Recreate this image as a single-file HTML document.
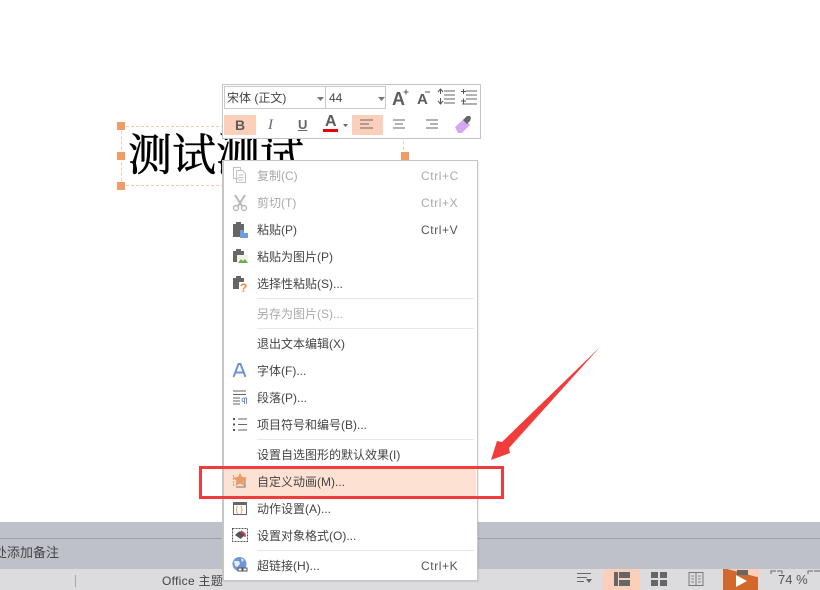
<!DOCTYPE html>
<html lang="zh">
<head>
<meta charset="utf-8">
<style>
html,body{margin:0;padding:0}
body{width:820px;height:590px;overflow:hidden;background:#fff;position:relative;font-family:"Liberation Sans","Noto Sans CJK SC",sans-serif;font-size:12px;color:#444}
.a{position:absolute}
.h{position:absolute;width:8px;height:8px;background:#f09c64}
.it{position:absolute;left:257px;height:18px;line-height:18px;white-space:nowrap;font-size:12px;color:#444}
.dis{color:#aaa}
.k{position:absolute;left:421px;height:18px;line-height:18px;font-size:12px;color:#555;letter-spacing:.6px}
.k.dis{color:#aaa}
.sep{position:absolute;left:257px;width:217px;height:1px;background:#e8e8e8}
svg{position:absolute;overflow:visible}
</style>
</head>
<body>
<!-- bottom area -->
<div class="a" style="left:0;top:522px;width:820px;height:47px;background:#bfc1ca"></div>
<div class="a" style="left:0;top:538px;width:820px;height:1px;background:#9fa1a8"></div>
<div class="a" style="left:-19px;top:544px;font-size:13px;line-height:18px;color:#444;white-space:nowrap">此处添加备注</div>
<div class="a" style="left:0;top:569px;width:820px;height:21px;background:#dcdcde"></div>
<div class="a" style="left:75px;top:575px;width:1px;height:12px;background:#a8a8a8"></div>
<div class="a" style="left:162px;top:572px;font-size:12px;line-height:18px;color:#444;white-space:nowrap;letter-spacing:.3px">Office 主题</div>

<!-- status icons -->
<svg style="left:0;top:0" width="820" height="590">
<g fill="#666">
<rect x="577" y="573" width="14" height="1"/><rect x="577" y="577" width="10" height="1"/><rect x="577" y="581" width="7" height="1"/><path d="M586 579h6l-3 4z"/>
</g>
<rect x="603" y="569" width="37" height="21" fill="#fbcfba"/>
<path d="M614 572h4v14h-4zM619 572h11v6h-11zM619 580h11v6h-11z" fill="#666"/>
<path d="M651 572h7v6h-7zM660 572h7v6h-7zM651 580h7v6h-7zM660 580h7v6h-7z" fill="#666"/>
<path d="M689 572.500h14v13h-14zM696 572.500v13" fill="none" stroke="#777"/>
<path d="M691 576h3M691 579h3M691 582h3M698 576h3M698 579h3M698 582h3" stroke="#888"/>
<rect x="723" y="569" width="35" height="21" fill="#d2692c"/>
<path d="M727 569h32v8l-2 0-30-8z" fill="#fbcfba"/>
<path d="M737 570h11v5h-11z" fill="#666"/>
<path d="M736 575l11 6-11 6z" fill="#fff"/>
<path d="M771 574v-3h5M777 571h5v3M808 574v-3h5M814 571h6" fill="none" stroke="#666"/>
</svg>
<div class="a" style="left:778px;top:571px;font-size:13px;line-height:18px;color:#555;white-space:nowrap">74 %</div>

<!-- text box -->
<div class="a" style="left:121px;top:126px;width:283px;height:60px;border:1px dashed #f5c9ac;box-sizing:border-box"></div>
<div class="h" style="left:117px;top:122px"></div>
<div class="h" style="left:117px;top:152px"></div>
<div class="h" style="left:117px;top:182px"></div>
<div class="h" style="left:401px;top:152px"></div>
<div class="a" style="left:128px;top:125px;font-family:'Liberation Serif','Noto Serif CJK SC',serif;font-size:44px;line-height:62px;color:#000;white-space:nowrap;-webkit-text-stroke:.6px #000">测试测试</div>

<!-- mini toolbar -->
<div class="a" style="left:222px;top:84px;width:259px;height:55px;background:#fff;border:1px solid #c4c4c4;box-sizing:border-box"></div>
<div class="a" style="left:224px;top:86px;width:102px;height:23px;border:1px solid #c8c8c8;box-sizing:border-box"></div>
<div class="a" style="left:325px;top:86px;width:61px;height:23px;border:1px solid #c8c8c8;box-sizing:border-box"></div>
<div class="a" style="left:227px;top:89px;font-size:12px;line-height:18px;color:#444;white-space:nowrap">宋体 (正文)</div>
<div class="a" style="left:329px;top:89px;font-size:12px;line-height:18px;color:#444">44</div>
<div class="a" style="left:224px;top:115px;width:32px;height:20px;background:#fbcfba"></div>
<div class="a" style="left:352px;top:115px;width:31px;height:20px;background:#fbcfba"></div>
<div class="a" style="left:235px;top:116px;font-size:14px;font-weight:bold;line-height:18px;color:#5c5c5c">B</div>
<div class="a" style="left:268px;top:116px;font-family:'Liberation Serif',serif;font-size:15px;font-style:italic;line-height:18px;color:#666">I</div>
<div class="a" style="left:298px;top:116px;font-size:13px;font-weight:bold;line-height:17px;color:#666;text-decoration:underline">U</div>
<div class="a" style="left:325px;top:113px;font-size:16px;font-weight:bold;line-height:18px;color:#5c5c5c">A</div>
<div class="a" style="left:392px;top:90px;font-size:18px;font-weight:bold;line-height:18px;color:#5c5c5c">A</div>
<div class="a" style="left:417px;top:92px;font-size:15px;font-weight:bold;line-height:16px;color:#5c5c5c">A</div>
<svg style="left:0;top:0" width="820" height="590">
<path d="M317 97h7l-3.500 4z" fill="#777"/>
<path d="M378 97h7l-3.500 4z" fill="#777"/>
<path d="M403.500 92h5M406 89.500v5" stroke="#555"/>
<path d="M425 92h5" stroke="#555"/>
<g stroke="#666" fill="none">
<path d="M444 91h11M444 95h11M444 99h11M444 103h11"/>
<path d="M438 92l2.500-3 2.500 3M440.500 89v5M438 101l2.500 3 2.500-3M440.500 98v5" stroke="#555"/>
<path d="M466 91h11M466 95h11M466 99h11M462 104h15"/>
<path d="M461 91.500h5M463.500 89v5M461 101h5M463.500 98.500v5" stroke="#555"/>
<path d="M360 120h13M360 124h9M360 128h13"/>
<path d="M393 120h12M395 124h8M393 128h12"/>
<path d="M426 120h12M430 124h8M426 128h12"/>
</g>
<rect x="323" y="129" width="15" height="3" fill="#e8000d"/>
<path d="M343 124h5l-2.500 3z" fill="#666"/>
<path d="M455 127l9-8 6 6-8 8h-4z" fill="#d3a8ee"/>
<path d="M463 120l4-4 3 0 1 2 -1 3-3 3z" fill="#666"/>
</svg>

<!-- context menu -->
<div class="a" style="left:222px;top:160px;width:256px;height:421px;background:#fff;border:1px solid #c6c6c6;border-left-width:2px;box-sizing:border-box;box-shadow:1px 1px 1px rgba(0,0,0,.08)"></div>
<div class="a" style="left:224px;top:467px;width:252px;height:29px;background:#fde1d3"></div>

<div class="it dis" style="top:167px">复制(C)</div><div class="k dis" style="top:167px">Ctrl+C</div>
<div class="it dis" style="top:194px">剪切(T)</div><div class="k dis" style="top:194px">Ctrl+X</div>
<div class="it" style="top:221px">粘贴(P)</div><div class="k" style="top:221px">Ctrl+V</div>
<div class="it" style="top:248px">粘贴为图片(P)</div>
<div class="it" style="top:275px">选择性粘贴(S)...</div>
<div class="sep" style="top:298px"></div>
<div class="it dis" style="top:305px">另存为图片(S)...</div>
<div class="sep" style="top:328px"></div>
<div class="it" style="top:335px">退出文本编辑(X)</div>
<div class="it" style="top:362px">字体(F)...</div>
<div class="it" style="top:389px">段落(P)...</div>
<div class="it" style="top:416px">项目符号和编号(B)...</div>
<div class="sep" style="top:439px"></div>
<div class="it" style="top:446px">设置自选图形的默认效果(I)</div>
<div class="it" style="top:473px">自定义动画(M)...</div>
<div class="it" style="top:500px">动作设置(A)...</div>
<div class="it" style="top:527px">设置对象格式(O)...</div>
<div class="sep" style="top:550px"></div>
<div class="it" style="top:557px">超链接(H)...</div><div class="k" style="top:557px">Ctrl+K</div>

<!-- menu icons -->
<svg style="left:0;top:0" width="820" height="590">
<!-- copy -->
<path d="M238.500 178.500h-5v-11h7v3M236.500 170.500h6l3 3v9h-9z" fill="#fff" stroke="#c2c2c2"/>
<path d="M238.500 175h5M238.500 177.500h5M238.500 180h5" stroke="#c2c2c2"/>
<!-- cut -->
<path d="M235 195l7 11M245 195l-7 11" stroke="#b8b8b8" stroke-width="2" fill="none"/>
<circle cx="236" cy="208" r="2.500" fill="none" stroke="#b8b8b8" stroke-width="1.500"/>
<circle cx="244" cy="208" r="2.500" fill="none" stroke="#b8b8b8" stroke-width="1.500"/>
<!-- paste -->
<path d="M233 224h3v-2h5v2h3v13h-11z" fill="#666"/>
<path d="M240 230h4l0 3h4v5h-8z" fill="#6f9be0"/>
<!-- paste picture -->
<path d="M233 251h3v-2h5v2h3v11h-11z" fill="#666"/>
<rect x="237" y="255" width="11" height="8" fill="#eef3ea"/>
<path d="M238 263l3-4 2 2 2-2 3 4z" fill="#6fae55"/>
<!-- selective paste -->
<path d="M233 278h3v-2h5v2h3v11h-11z" fill="#666"/>
<path d="M239 282h9v11h-9z" fill="#fff"/>
<text x="240" y="292" font-size="12" font-weight="bold" fill="#ee8a3c" font-family="Liberation Sans">?</text>
<!-- font A -->
<path d="M233.500 377l5-13h2l5 13M235.500 372.500h8" fill="none" stroke="#6f92d8" stroke-width="2"/>
<!-- paragraph -->
<path d="M233 391h13M233 394.500h13M233 398h7M233 401h7M233 404h7" stroke="#666" fill="none"/>
<path d="M243 398h4M243 398a2 2 0 0 0 0 3.500h1.500v-3.500M244.500 398v6M246.500 398v6" stroke="#6f92d8" fill="none"/>
<!-- list -->
<path d="M233 418h2v2h-2zM233 423.500h2v2h-2zM233 429h2v2h-2z" fill="#555"/>
<path d="M238 419h9M238 424.500h9M238 430h9" stroke="#666"/>
<!-- custom animation -->
<path d="M233 476h1M233 479h1M233 482h1M233 485h1M236 487h9v-8" stroke="#777" fill="none"/>
<path d="M240 473l2 4 5 .5-3.500 3.500 1 5-4.500-2.500-4.500 2.500 1-5-3.500-3.500 5-.5z" fill="#ee9a60"/>
<!-- action -->
<path d="M233 502h14v3h-14z" fill="#666"/>
<rect x="233.500" y="502.500" width="13" height="12" fill="none" stroke="#666"/>
<text x="235.500" y="512" font-size="8" fill="#e8773a" font-family="Liberation Sans">{ }</text>
<!-- format -->
<rect x="232.500" y="528.500" width="15" height="13" fill="none" stroke="#555" stroke-dasharray="2 1"/>
<path d="M235 535l4-3.500h3l3 3.500-4.500 4z" fill="#555"/>
<path d="M241 531l4 3v3" fill="none" stroke="#d84a3a" stroke-width="1.500"/>
<!-- hyperlink -->
<circle cx="239.500" cy="564" r="7" fill="#6f97d8"/>
<path d="M234 561h5l1 3-3 3-2-1zM241 558l3 2-2 2z" fill="#e6eefa"/>
<rect x="238" y="568" width="4" height="3" fill="#fff" stroke="#555"/>
<rect x="243" y="568" width="4" height="3" fill="#fff" stroke="#555"/>
</svg>

<!-- annotations -->
<div class="a" style="left:199px;top:466px;width:305px;height:33px;border:3px solid #f03c3c;box-sizing:border-box"></div>
<svg style="left:0;top:0" width="820" height="590">
<path d="M600 347L502 442 497 441 491 460 510 453 509 448z" fill="#f23c3c"/>
</svg>
</body>
</html>
